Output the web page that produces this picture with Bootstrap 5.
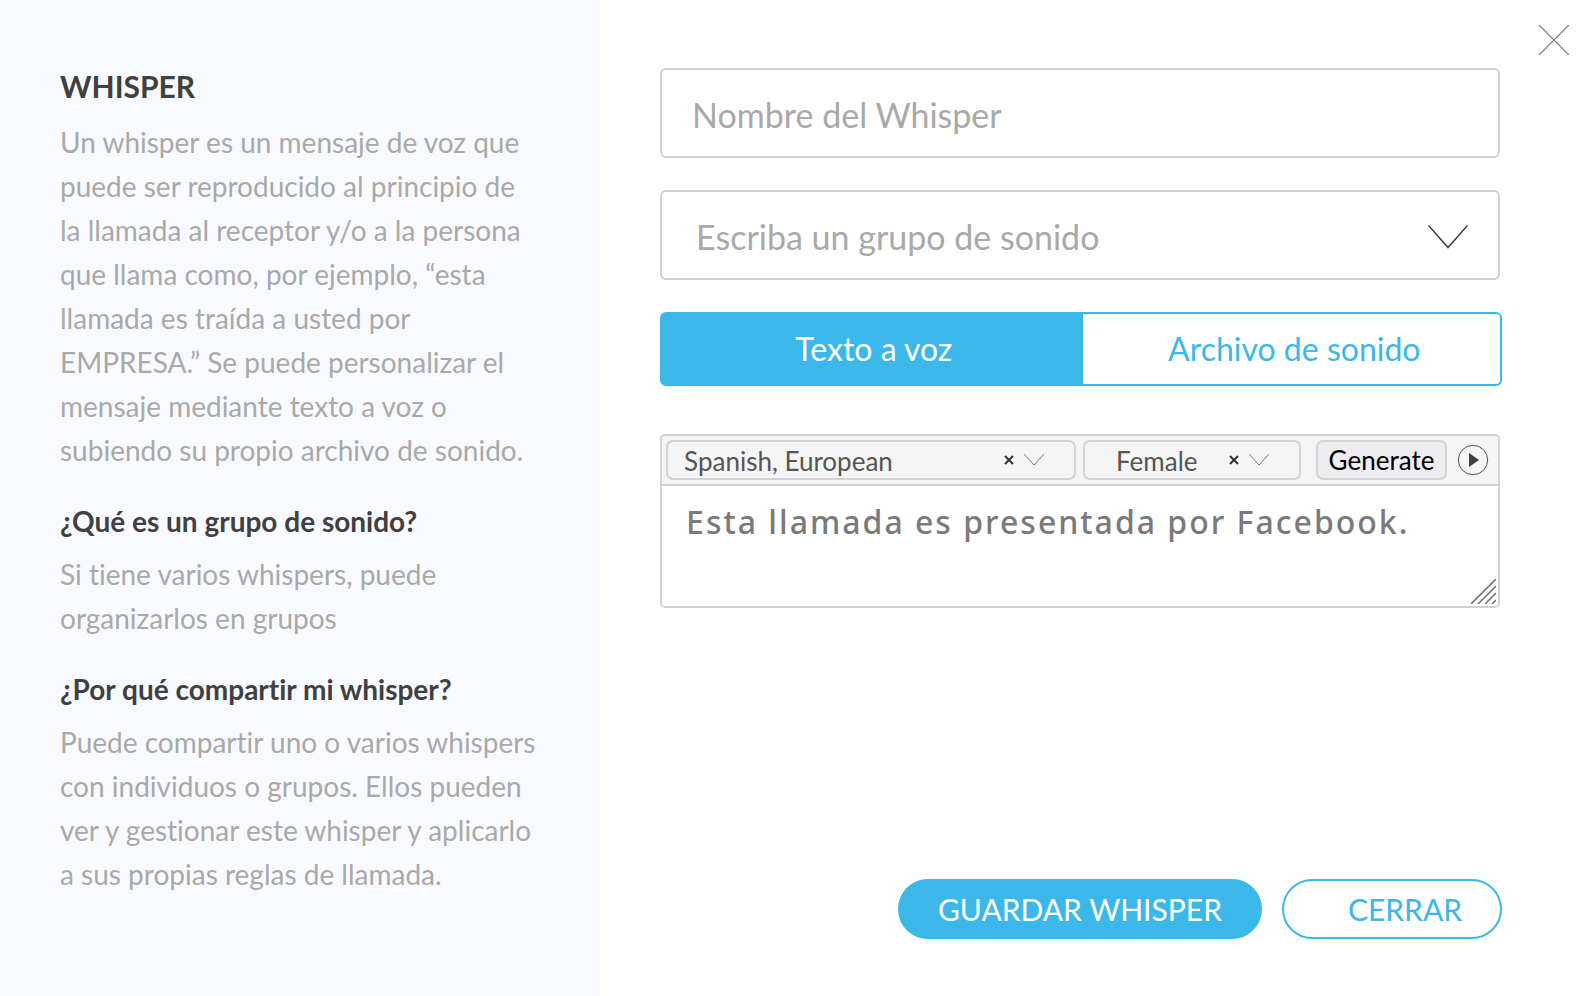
<!DOCTYPE html>
<html lang="es">
<head>
<meta charset="utf-8">
<meta name="viewport" content="width=device-width, initial-scale=1">
<title>Whisper</title>
<link href="https://cdn.jsdelivr.net/npm/bootstrap@5.3.0/dist/css/bootstrap.min.css" rel="stylesheet">
<style>
  :root { --accent: #3bb8e9; --line: #d2d2d2; --muted: #a9a9a9; --ink: #404040; }
  body { font-family: Lato, "Open Sans", sans-serif; font-variant-ligatures: none; color: var(--ink); background: #fff; }
  .help-pane { flex: 0 0 37.6%; background: #f9faff; padding: 64px 40px 60px 60px; font-size: 28px; line-height: 44px; }
  .help-pane h1 { font-size: 30px; line-height: 44px; font-weight: 700; margin: 0 0 12px; }
  .help-pane h2 { font-size: 28px; line-height: 44px; font-weight: 700; margin: 27px 0 9px; }
  .help-pane p { margin: 0; color: var(--muted); }
  .form-pane { min-width: 0; padding: 68px 94px 57px 60px; }
  .form-stack { gap: 32px; margin-right: 2px; }
  .field-box { height: 90px; border: 2px solid var(--line); border-radius: 6px; background: #fff; font-size: 34px; line-height: 40px; padding: 2px 30px 0; color: var(--muted); }
  .field-box::placeholder { color: var(--muted); opacity: 1; }
  .field-box select, .picker select { appearance: none; border: 0; background: transparent; color: inherit; font: inherit; padding: 0; min-width: 0; outline: 0; }
  .group-box { padding: 3px 30px 0 34px; }
  .mode-switch { margin: 0 -2px 0 0; height: 74px; }
  .mode-switch .btn { --bs-btn-color: var(--accent); --bs-btn-border-color: var(--accent); --bs-btn-active-bg: var(--accent); --bs-btn-active-border-color: var(--accent); --bs-btn-active-color: #fff; border-width: 2px; border-radius: 6px; padding: 0 6px 0 12px; font-size: 32px; line-height: 40px; flex: 1 1 0; display: flex; align-items: center; justify-content: center; }
  .speech-box { margin-top: 16px; border: 2px solid var(--line); border-radius: 5px; overflow: hidden; }
  .speech-bar { background: #f5f5f5; border-bottom: 2px solid var(--line); padding: 4px 9px 4px 4px; height: 50px; }
  .picker { height: 40px; border: 2px solid var(--line); border-radius: 7px; font-size: 26px; line-height: 32px; color: #555; }
  .picker select { padding-top: 2px; }
  .picker-language { flex: 1 1 410px; padding: 0 30px 0 16px; margin-right: 7px; }
  .picker-voice { flex: 0 1 218px; padding: 0 30px 0 31px; margin-right: 15px; }
  .plain-btn { border: 0; background: transparent; padding: 0; line-height: 0; display: block; }
  .clear-btn { margin-right: 10px; }
  .generate-btn { height: 40px; flex: 0 0 131px; border: 2px solid var(--line); border-radius: 7px; background: #edecf1; color: #000; font-size: 26px; line-height: 32px; padding: 0; margin-right: 10px; white-space: nowrap; }
  .speech-text { display: block; width: 100%; height: 120px; border: 0; outline: 0; resize: none; padding: 14px 24px; font-family: "Noto Sans", "Open Sans", sans-serif; font-size: 32px; font-weight: 500; line-height: 44px; letter-spacing: 2px; color: #7a7a7a; }
  .grip { right: 2px; bottom: 2px; pointer-events: none; }
  .action-row { gap: 20px; }
  .pill { height: 60px; border: 2px solid var(--accent); border-radius: 30px; font-size: 30px; line-height: 36px; padding: 0 38px; }
  .pill-solid { background: var(--accent); color: #fff; }
  .pill-line { background: #fff; color: var(--accent); padding-left: 64px; }
  .close-btn { top: 25px; right: 27px; }
</style>
</head>
<body>
<div class="d-flex min-vh-100 position-relative">
  <aside class="help-pane">
    <h1>WHISPER</h1>
    <p>Un whisper es un mensaje de voz que<br>puede ser reproducido al principio de<br>la llamada al receptor y/o a la persona<br>que llama como, por ejemplo, “esta<br>llamada es traída a usted por<br>EMPRESA.” Se puede personalizar el<br>mensaje mediante texto a voz o<br>subiendo su propio archivo de sonido.</p>
    <h2>¿Qué es un grupo de sonido?</h2>
    <p>Si tiene varios whispers, puede<br>organizarlos en grupos</p>
    <h2>¿Por qué compartir mi whisper?</h2>
    <p>Puede compartir uno o varios whispers<br>con individuos o grupos. Ellos pueden<br>ver y gestionar este whisper y aplicarlo<br>a sus propias reglas de llamada.</p>
  </aside>

  <main class="form-pane flex-grow-1 d-flex flex-column">
    <form class="d-flex flex-column flex-grow-1">
      <div class="form-stack d-flex flex-column">
        <input class="field-box w-100" type="text" placeholder="Nombre del Whisper" aria-label="Nombre del Whisper">

        <div class="field-box group-box d-flex align-items-center">
          <select class="flex-grow-1" aria-label="Grupo de sonido"><option>Escriba un grupo de sonido</option></select>
          <svg width="40" height="24" viewBox="0 0 40 24" fill="none" stroke="#404040" stroke-width="1.5" aria-hidden="true"><path d="M.5 .5 20 22.500 39.500 .5"/></svg>
        </div>

        <div class="mode-switch btn-group" role="group" aria-label="Origen del mensaje">
          <input type="radio" class="btn-check" name="mode" id="mode-text" checked>
          <label class="btn" for="mode-text">Texto a voz</label>
          <input type="radio" class="btn-check" name="mode" id="mode-file">
          <label class="btn" for="mode-file">Archivo de sonido</label>
        </div>

        <div class="speech-box position-relative">
          <div class="speech-bar d-flex align-items-center">
            <div class="picker picker-language d-flex align-items-center">
              <select class="flex-grow-1" aria-label="Idioma"><option>Spanish, European</option></select>
              <button type="button" class="plain-btn clear-btn" aria-label="Quitar idioma"><svg width="10" height="10" viewBox="0 0 10 10" stroke="#333" stroke-width="2"><path d="M1 1 9 9M9 1 1 9"/></svg></button>
              <svg width="20" height="12" viewBox="0 0 20 12" fill="none" stroke="#404040" stroke-width=".7" aria-hidden="true"><path d="M.3 .3 10 11 19.700 .3"/></svg>
            </div>
            <div class="picker picker-voice d-flex align-items-center">
              <select class="flex-grow-1" aria-label="Voz"><option>Female</option></select>
              <button type="button" class="plain-btn clear-btn" aria-label="Quitar voz"><svg width="10" height="10" viewBox="0 0 10 10" stroke="#333" stroke-width="2"><path d="M1 1 9 9M9 1 1 9"/></svg></button>
              <svg width="20" height="12" viewBox="0 0 20 12" fill="none" stroke="#404040" stroke-width=".7" aria-hidden="true"><path d="M.3 .3 10 11 19.700 .3"/></svg>
            </div>
            <button type="button" class="generate-btn">Generate</button>
            <button type="button" class="plain-btn" aria-label="Reproducir"><svg width="32" height="32" viewBox="0 0 32 32"><circle cx="16" cy="16" r="14.700" fill="none" stroke="#404040" stroke-width=".9"/><path d="M12 9v14l10-7z" fill="#404040"/></svg></button>
          </div>
          <textarea class="speech-text" aria-label="Mensaje" spellcheck="false">Esta llamada es presentada por Facebook.</textarea>
          <svg class="grip position-absolute" width="25" height="25" viewBox="0 0 25 25" stroke="#777" stroke-width="1.600" aria-hidden="true"><path d="M0 25 25 0M7 25 25 7M14 25 25 14M21 25 25 21"/></svg>
        </div>
      </div>

      <div class="action-row d-flex justify-content-end mt-auto pt-4">
        <button type="submit" class="pill pill-solid">GUARDAR WHISPER</button>
        <button type="button" class="pill pill-line">CERRAR</button>
      </div>
    </form>
  </main>

  <button type="button" class="plain-btn close-btn position-absolute" aria-label="Cerrar ventana"><svg width="30" height="30" viewBox="0 0 30 30" stroke="#777" stroke-width="1.200"><path d="M0 0 30 30M30 0 0 30"/></svg></button>
</div>
<script src="https://cdn.jsdelivr.net/npm/bootstrap@5.3.0/dist/js/bootstrap.bundle.min.js"></script>
</body>
</html>
